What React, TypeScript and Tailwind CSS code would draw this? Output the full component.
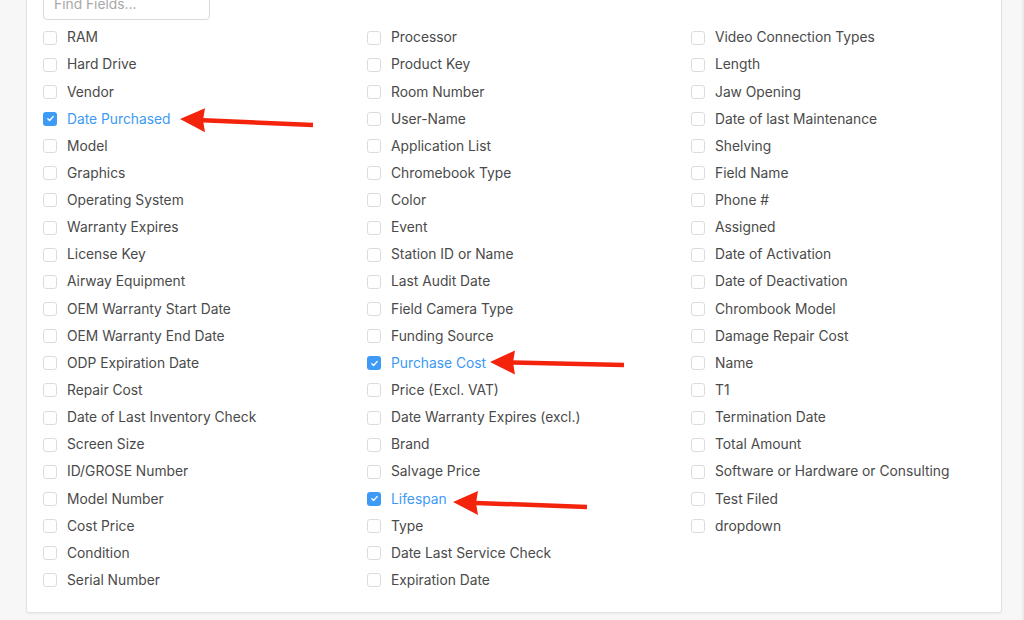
const col1 = [
  'RAM', 'Hard Drive', 'Vendor', 'Date Purchased', 'Model', 'Graphics', 'Operating System',
  'Warranty Expires', 'License Key', 'Airway Equipment', 'OEM Warranty Start Date',
  'OEM Warranty End Date', 'ODP Expiration Date', 'Repair Cost', 'Date of Last Inventory Check',
  'Screen Size', 'ID/GROSE Number', 'Model Number', 'Cost Price', 'Condition', 'Serial Number',
]
const col2 = [
  'Processor', 'Product Key', 'Room Number', 'User-Name', 'Application List', 'Chromebook Type',
  'Color', 'Event', 'Station ID or Name', 'Last Audit Date', 'Field Camera Type', 'Funding Source',
  'Purchase Cost', 'Price (Excl. VAT)', 'Date Warranty Expires (excl.)', 'Brand', 'Salvage Price',
  'Lifespan', 'Type', 'Date Last Service Check', 'Expiration Date',
]
const col3 = [
  'Video Connection Types', 'Length', 'Jaw Opening', 'Date of last Maintenance', 'Shelving',
  'Field Name', 'Phone #', 'Assigned', 'Date of Activation', 'Date of Deactivation',
  'Chrombook Model', 'Damage Repair Cost', 'Name', 'T1', 'Termination Date', 'Total Amount',
  'Software or Hardware or Consulting', 'Test Filed', 'dropdown',
]
const checked = ['Date Purchased', 'Purchase Cost', 'Lifespan']

const Field = ({ label }: { label: string }) => {
  const on = checked.includes(label)
  return (
    <div className="flex items-center h-[27.15px]">
      {on ? (
        <span className="w-[14px] h-[14px] rounded-[3px] bg-[#3d9af5] flex items-center justify-center">
          <svg width="9" height="9" viewBox="0 0 10 10" fill="none">
            <path d="M2 5.2l2 2 4-4.4" stroke="white" strokeWidth="1.4" strokeLinecap="round" strokeLinejoin="round" />
          </svg>
        </span>
      ) : (
        <span className="w-[14px] h-[14px] rounded-[3px] border border-[#dcdcdc] bg-white" />
      )}
      <span className={`ml-[10px] text-[13.8px] ${on ? 'text-[#3d9af5]' : 'text-[#4a4a4a]'}`}>{label}</span>
    </div>
  )
}

const Arrow = ({ tx, ty, bx, ex, ey, h }: { tx: number; ty: number; bx: number; ex: number; ey: number; h: number }) => {
  const my = ty + ((ey - ty) * (bx - tx)) / (ex - tx)
  return (
    <>
      <line x1={bx - 2} y1={my} x2={ex} y2={ey} stroke="#f3230c" strokeWidth="4.5" />
      <polygon points={`${tx},${ty} ${bx},${my - h} ${bx - 2},${my} ${bx},${my + h}`} fill="#f3230c" />
    </>
  )
}

const App = () => (
  <div className="relative h-[620px] w-[1024px] overflow-hidden bg-[#f7f7f7] border-r-[2px] border-[#ebebeb]" style={{ fontFamily: 'Inter, "Noto Sans", sans-serif' }}>
    <div className="ml-[26px] w-[976px] h-[653px] -mt-[40px] bg-white border border-[#e2e2e2] rounded-[3px] shadow-[0_1px_2px_rgba(0,0,0,0.05)] pl-[16px] pt-[28px]">
      <div className="w-[167px] h-[31px] border border-[#dadada] rounded-[4px] flex items-center px-[10px] text-[13.8px] text-[#a8a8a8]">
        Find Fields...
      </div>
      <div className="grid grid-cols-[324px_324px_1fr] mt-[4px]">
        <div>{col1.map((f) => <Field key={f} label={f} />)}</div>
        <div>{col2.map((f) => <Field key={f} label={f} />)}</div>
        <div>{col3.map((f) => <Field key={f} label={f} />)}</div>
      </div>
    </div>
    <svg className="absolute inset-0 pointer-events-none" width="1024" height="620">
      <Arrow tx={180} ty={119} bx={205} ex={313} ey={125} h={12} />
      <Arrow tx={490} ty={362} bx={515} ex={624} ey={365} h={12} />
      <Arrow tx={453} ty={502} bx={478} ex={587} ey={507} h={12} />
    </svg>
  </div>
)

export default App
